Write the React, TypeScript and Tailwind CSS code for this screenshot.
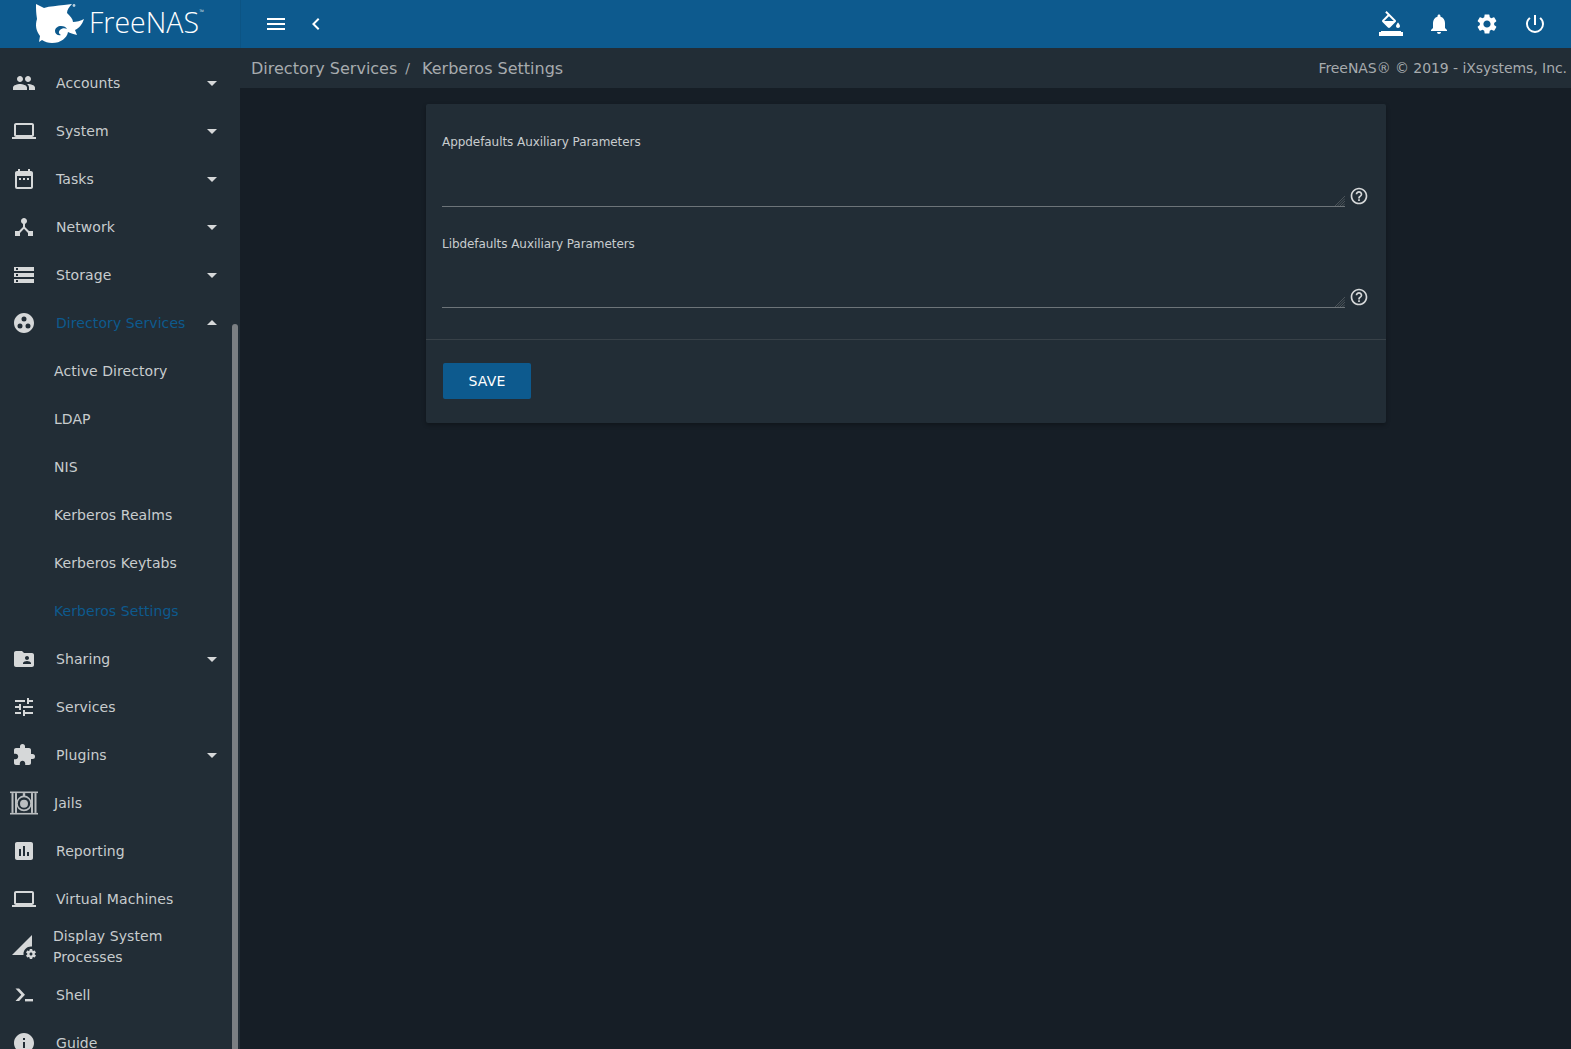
import type { ReactNode } from "react";
import {
  MdArrowDropDown,
  MdArrowDropUp,
  MdAssessment,
  MdChevronLeft,
  MdDateRange,
  MdDeviceHub,
  MdExtension,
  MdFolderShared,
  MdFormatColorFill,
  MdGroupWork,
  MdHelpOutline,
  MdInfo,
  MdLaptop,
  MdMenu,
  MdNotifications,
  MdPeople,
  MdPermDataSetting,
  MdPowerSettingsNew,
  MdSettings,
  MdStorage,
  MdTune,
} from "react-icons/md";

function ShellIcon() {
  return (
    <svg viewBox="0 0 24 24" className="h-6 w-6" fill="currentColor">
      <path d="M3.5 5.5h3.6l5.9 6.2-5.9 6.3H3.5l5.8-6.3z" />
      <rect x="13" y="16" width="8" height="2.4" />
    </svg>
  );
}

function JailsIcon() {
  return (
    <svg viewBox="0 0 28 24" className="h-6 w-7" fill="currentColor" opacity="0.85">
      <rect x="0" y="0.5" width="28" height="1.6" />
      <rect x="0" y="21.9" width="28" height="1.6" />
      <rect x="1.5" y="2.1" width="2" height="19.8" />
      <rect x="5" y="2.1" width="2" height="19.8" />
      <rect x="21" y="2.1" width="2" height="19.8" />
      <rect x="24.5" y="2.1" width="2" height="19.8" />
      <circle cx="14" cy="12.4" r="7" fill="none" stroke="currentColor" strokeWidth="1.6" />
      <circle cx="14" cy="12.8" r="4" />
      <rect x="12.8" y="2.1" width="2.4" height="3.4" />
    </svg>
  );
}

function SharkLogo() {
  return (
    <svg viewBox="0 0 50 44" className="-mt-[3px] h-[44px] w-[50px]" fill="#ffffff">
      <path
        fillRule="evenodd"
        d="M1 3 L9 7 C15 5 22 5 29 4 L37 3 C34 6 32 9 32 12 C35 15 38 18 38 21 C41 21 46 20 49 18 C47 24 44 27 40 29 L42 34 C38 33 35 32 33 31 C32 37 26 42 17 42 C13 42 10 41 7 39 L4 41 L5 35 C1 30 0 24 2 18 C1 12 1 8 1 3 Z M26 25 C23 25 20 27 20 30 C20 33 23 35 26 34 C24 33 23 31 25 29 C27 27 30 27 32 28 C31 26 29 25 26 25 Z"
      />
      <circle cx="39" cy="4.5" r="1.4" opacity="0.7" />
    </svg>
  );
}

type NavItem = {
  label: string;
  icon: ReactNode;
  caret?: "down" | "up";
  active?: boolean;
  textClass?: string;
};

const topItems: NavItem[] = [
  { label: "Accounts", icon: <MdPeople size={24} />, caret: "down" },
  { label: "System", icon: <MdLaptop size={24} />, caret: "down" },
  { label: "Tasks", icon: <MdDateRange size={24} />, caret: "down" },
  { label: "Network", icon: <MdDeviceHub size={24} />, caret: "down" },
  { label: "Storage", icon: <MdStorage size={24} />, caret: "down" },
  { label: "Directory Services", icon: <MdGroupWork size={24} />, caret: "up", active: true },
];

const subItems = [
  { label: "Active Directory" },
  { label: "LDAP" },
  { label: "NIS" },
  { label: "Kerberos Realms" },
  { label: "Kerberos Keytabs" },
  { label: "Kerberos Settings", active: true },
];

const bottomItems: NavItem[] = [
  { label: "Sharing", icon: <MdFolderShared size={24} />, caret: "down" },
  { label: "Services", icon: <MdTune size={24} /> },
  { label: "Plugins", icon: <MdExtension size={24} />, caret: "down" },
  { label: "Jails", icon: <JailsIcon />, textClass: "ml-[6px] flex-1" },
  { label: "Reporting", icon: <MdAssessment size={24} /> },
  { label: "Virtual Machines", icon: <MdLaptop size={24} /> },
  {
    label: "Display System Processes",
    icon: <MdPermDataSetting size={24} />,
    textClass: "ml-[5px] w-[130px] flex-none leading-[21px]",
  },
  { label: "Shell", icon: <ShellIcon /> },
  { label: "Guide", icon: <MdInfo size={24} /> },
];

function NavRow({ item }: { item: NavItem }) {
  return (
    <div className={`flex h-12 shrink-0 items-center ${item.active ? "text-[#0d5a8e]" : "text-[#c8ccce]"}`}>
      <div className="flex w-12 shrink-0 items-center justify-center text-[#d6d8d9]">{item.icon}</div>
      <span className={`text-[14px] tracking-[0.08px] ${item.textClass ?? "ml-2 flex-1"}`}>{item.label}</span>
      {item.caret === "down" && <MdArrowDropDown size={24} className="mr-4 text-[#d6d8d9]" />}
      {item.caret === "up" && <MdArrowDropUp size={24} className="mr-4 text-[#d6d8d9]" />}
    </div>
  );
}

function ResizeGrip() {
  return (
    <svg viewBox="0 0 10 10" className="absolute bottom-[1px] right-0 h-[10px] w-[10px]" stroke="#565d62" strokeWidth="0.8">
      <path d="M0 10 L10 0 M2.5 10 L10 2.5 M5 10 L10 5 M7.5 10 L10 7.5" />
    </svg>
  );
}

function Field({ label, boxClass }: { label: string; boxClass: string }) {
  return (
    <div className="flex items-end">
      <div className="flex-1">
        <div className="text-[12px] leading-[15px] tracking-[-0.06px] text-[#c8ccce]">{label}</div>
        <div className={`relative h-[37px] ${boxClass}`}>
          <textarea className="block h-full w-full resize-none border-b border-[#6d7479] bg-transparent outline-none" />
          <ResizeGrip />
        </div>
      </div>
      <MdHelpOutline size={20} className="mb-[1px] ml-[4px] w-[20px] shrink-0 text-[#d6d8d9]" />
    </div>
  );
}

export default function App() {
  return (
    <div
      className="flex h-[1049px] w-[1571px] flex-col overflow-hidden bg-[#161e26]"
      style={{ fontFamily: '"DejaVu Sans", sans-serif' }}
    >
      <header className="flex h-12 shrink-0 items-center bg-[#0d5a8e] text-white">
        <div className="flex h-12 w-[241px] shrink-0 items-center border-r border-[#0c5484] pl-[35px]">
          <SharkLogo />
          <span
            className="relative -mt-[4px] ml-[4px] text-[28.5px] font-light leading-none"
            style={{ fontFamily: '"Open Sans", sans-serif' }}
          >
            FreeNAS
            <span className="absolute -right-[5px] top-[1px] text-[6px]">™</span>
          </span>
        </div>
        <MdMenu size={24} className="ml-[23px]" />
        <MdChevronLeft size={24} className="ml-[16px]" />
        <div className="ml-auto flex items-center gap-[24px] pr-[24px]">
          <div className="flex flex-col items-center">
            <MdFormatColorFill size={24} className="-mb-[3px] -mt-[2px]" />
            <div className="h-[4px] w-[24px] bg-white" />
          </div>
          <MdNotifications size={24} />
          <MdSettings size={24} />
          <MdPowerSettingsNew size={24} />
        </div>
      </header>
      <div className="flex min-h-0 flex-1">
        <aside className="relative flex w-[240px] shrink-0 flex-col overflow-hidden bg-[#222d36] pt-[11px]">
          {topItems.map((item) => (
            <NavRow key={item.label} item={item} />
          ))}
          {subItems.map((sub) => (
            <div
              key={sub.label}
              className={`flex h-12 shrink-0 items-center pl-[54px] text-[14px] tracking-[0.07px] ${sub.active ? "text-[#0d5a8e]" : "text-[#c8ccce]"}`}
            >
              {sub.label}
            </div>
          ))}
          {bottomItems.map((item) => (
            <NavRow key={item.label} item={item} />
          ))}
          <div className="absolute bottom-0 left-[232px] top-[276px] w-[6px] rounded-t-[3px] bg-[#7b7f83]" />
        </aside>
        <main className="min-w-0 flex-1">
          <div className="flex h-10 items-center justify-between bg-[#222d36] pl-[11px] pr-[4px] text-[#a7abae]">
            <div className="flex items-center pt-[1px] text-[16px]">
              <span>Directory Services</span>
              <span className="ml-[8px] text-[14px]">/</span>
              <span className="ml-[12px]">Kerberos Settings</span>
            </div>
            <span className="text-[14px] tracking-[-0.06px]">FreeNAS® © 2019 - iXsystems, Inc.</span>
          </div>
          <div className="ml-[186px] mt-4 w-[960px] rounded-[2px] bg-[#222d36] shadow-[0_2px_4px_rgba(0,0,0,0.3)]">
            <div className="flex flex-col gap-[30px] pb-[31px] pl-4 pr-[17px] pt-[31px]">
              <Field label="Appdefaults Auxiliary Parameters" boxClass="mt-[20px]" />
              <Field label="Libdefaults Auxiliary Parameters" boxClass="mt-[19px]" />
            </div>
            <div className="border-t border-[#384148] px-[17px] pb-[24px] pt-[23px]">
              <button className="h-[36px] w-[88px] rounded-[2px] bg-[#0d5a8e] text-[14px] tracking-[0.2px] text-white">
                SAVE
              </button>
            </div>
          </div>
        </main>
      </div>
    </div>
  );
}
